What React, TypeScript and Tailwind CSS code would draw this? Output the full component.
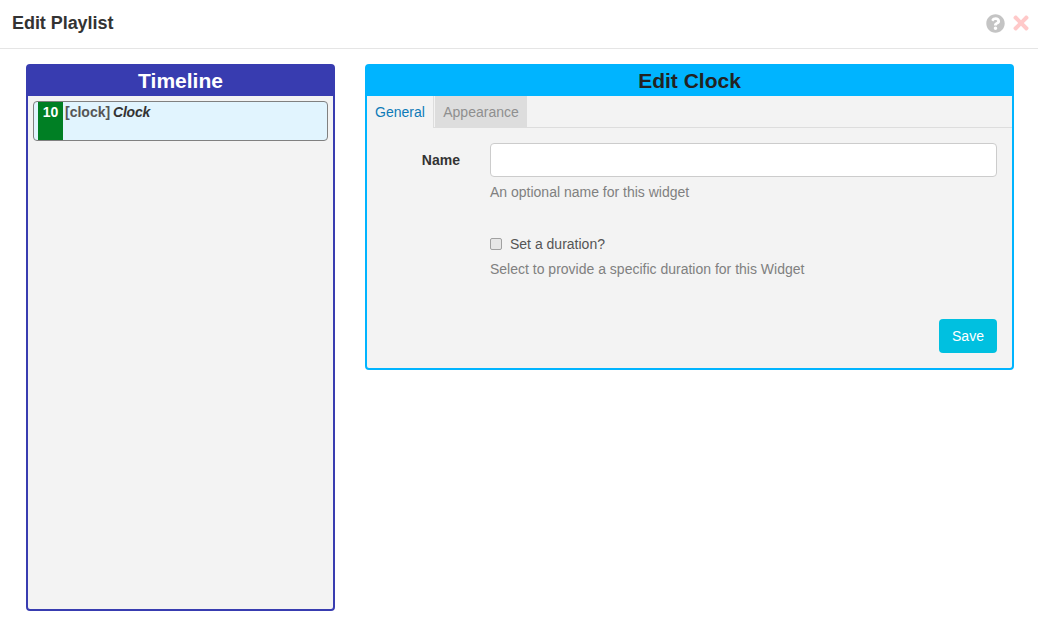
import { FC } from "react";
import { FaQuestionCircle, FaTimes } from "react-icons/fa";

const App: FC = () => {
  return (
    <div className="w-[1038px] h-[622px] overflow-hidden bg-white font-['Liberation_Sans',Arial,sans-serif] text-[14px] text-[#333]">
      {/* modal header */}
      <div className="h-[49px] border-b border-[#e5e5e5] flex items-center justify-between pb-[2px] pl-[12px] pr-[6px]">
        <span className="text-[18px] tracking-[-0.05px] font-bold text-[#333]">Edit Playlist</span>
        <div className="flex items-center gap-[5px]">
          <FaQuestionCircle className="w-[19px] h-[19px] text-[#c4c4c4]" />
          <FaTimes className="w-[22px] h-[22px] text-[#ffc9c9]" />
        </div>
      </div>

      <div className="flex items-start gap-[30px] pl-[26px] pt-[15px]">
        {/* timeline */}
        <div className="w-[309px] h-[547px] rounded-[4px] border-2 border-[#383cb0] bg-[#f3f3f3] flex flex-col">
          <div className="h-[30px] bg-[#383cb0] text-white text-center text-[21px] font-bold leading-[30px] shrink-0">
            Timeline
          </div>
          <div className="pt-[5px] px-[5px]">
            <div className="w-[295px] h-[40px] rounded-[4px] border border-[#808080] bg-[#e1f4fe] pl-[4px] flex">
              <div className="w-[25px] h-full bg-[#007f24] text-white font-bold text-center leading-[20px]">10</div>
              <div className="pl-[2px] leading-[20px] font-bold text-[#555]">
                [clock] <em className="-ml-[1px] text-[#333] tracking-[-0.2px]">Clock</em>
              </div>
            </div>
          </div>
        </div>

        {/* edit form */}
        <div className="w-[649px] h-[306px] rounded-[4px] border-2 border-[#00b4ff] bg-[#f3f3f3] flex flex-col">
          <div className="h-[30px] bg-[#00b4ff] text-[#222] text-center text-[21px] font-bold leading-[30px] shrink-0">
            Edit Clock
          </div>
          <div className="h-[32px] border-b border-[#ddd] flex shrink-0">
            <div className="w-[67px] h-[32px] border-r border-[#ddd] bg-[#f3f3f3] text-[#0e7bb8] text-center leading-[32px]">
              General
            </div>
            <div className="ml-[1px] w-[92px] h-[31px] bg-[#ddd] text-[#8f8f8f] text-center leading-[32px]">
              Appearance
            </div>
          </div>

          <div className="flex pt-[15px] pr-[15px]">
            <div className="w-[93px] pt-[7px] text-right font-bold leading-[20px]">Name</div>
            <div className="ml-[30px] flex-1">
              <input
                type="text"
                className="block w-full h-[34px] rounded-[4px] border border-[#ccc] bg-white"
              />
              <p className="mt-[5px] leading-[20px] text-[#808080]">An optional name for this widget</p>
              <label className="mt-[32px] flex items-center leading-[20px] text-[#555]">
                <span className="w-[12px] h-[12px] rounded-[2px] border border-[#a0a0a0] bg-[#e6e6e6] mr-[8px]" />
                Set a duration?
              </label>
              <p className="mt-[5px] leading-[20px] text-[#808080]">
                Select to provide a specific duration for this Widget
              </p>
            </div>
          </div>

          <div className="flex justify-end pr-[15px] pt-[40px]">
            <button className="w-[58px] h-[34px] rounded-[4px] bg-[#00c0e0] text-white text-center">Save</button>
          </div>
        </div>
      </div>
    </div>
  );
};

export default App;
